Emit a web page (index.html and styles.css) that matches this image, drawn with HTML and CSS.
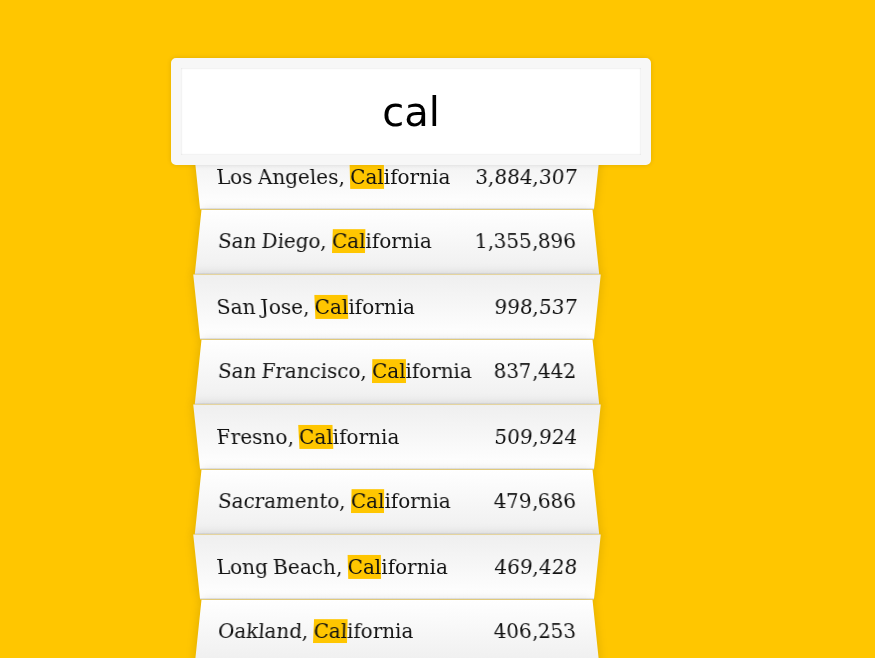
FILE: index.html
```html
<!DOCTYPE html>
<html lang="en">
<head>
<meta charset="utf-8">
<title>Type Ahead</title>
<link rel="stylesheet" href="styles.css">
</head>
<body>
<form class="search-form">
  <input type="text" class="search" value="cal" placeholder="City or State">
  <ul class="suggestions">
    <li><span class="name">Los Angeles, <span class="hl">Cal</span>ifornia</span><span class="population">3,884,307</span></li>
    <li><span class="name">San Diego, <span class="hl">Cal</span>ifornia</span><span class="population">1,355,896</span></li>
    <li><span class="name">San Jose, <span class="hl">Cal</span>ifornia</span><span class="population">998,537</span></li>
    <li><span class="name">San Francisco, <span class="hl">Cal</span>ifornia</span><span class="population">837,442</span></li>
    <li><span class="name">Fresno, <span class="hl">Cal</span>ifornia</span><span class="population">509,924</span></li>
    <li><span class="name">Sacramento, <span class="hl">Cal</span>ifornia</span><span class="population">479,686</span></li>
    <li><span class="name">Long Beach, <span class="hl">Cal</span>ifornia</span><span class="population">469,428</span></li>
    <li><span class="name">Oakland, <span class="hl">Cal</span>ifornia</span><span class="population">406,253</span></li>
  </ul>
</form>
</body>
</html>
```
FILE: styles.css
```css
*, *::before, *::after {
  box-sizing: border-box;
}
html {
  background: #ffc600;
}
body {
  margin: 0;
  font-family: "DejaVu Serif", serif;
  font-size: 20px;
  color: #111;
  overflow: hidden;
  height: 658px;
}
.search-form {
  width: 400px;
  margin: 0 0 0 196.5px;
  padding-top: 58px;
}
input.search {
  display: block;
  position: relative;
  z-index: 2;
  width: 480px;
  height: 107px;
  margin: 0 0 -23px -25.5px;
  padding: 20px;
  text-align: center;
  outline: 0;
  border: 10px solid #f7f7f7;
  border-radius: 5px;
  font-family: "DejaVu Sans", sans-serif;
  font-size: 40px;
  color: #000;
  background: #fff;
  box-shadow: 0 0 5px rgba(0, 0, 0, 0.12), inset 0 0 2px rgba(0, 0, 0, 0.19);
}
.suggestions {
  margin: 0;
  padding: 0;
  position: relative;
}
.suggestions li {
  list-style: none;
  border-bottom: 1px solid #d8d8d8;
  box-shadow: 0 0 10px rgba(0, 0, 0, 0.14);
  margin: 0;
  padding: 20px;
  line-height: 24px;
  display: flex;
  justify-content: space-between;
  text-transform: capitalize;
}
.suggestions li:nth-child(even) {
  transform: perspective(100px) rotateX(3deg) translateY(2px) translateZ(-0.8px) scale(1.001);
  background: linear-gradient(to bottom, #ffffff 0%, #efefef 100%);
}
.suggestions li:nth-child(odd) {
  transform: perspective(100px) rotateX(-3deg) translateY(3px) translateZ(0.3px);
  background: linear-gradient(to top, #ffffff 0%, #efefef 100%);
}
.name {
  word-spacing: -1px;
}
.hl {
  background: #ffc600;
}
```
